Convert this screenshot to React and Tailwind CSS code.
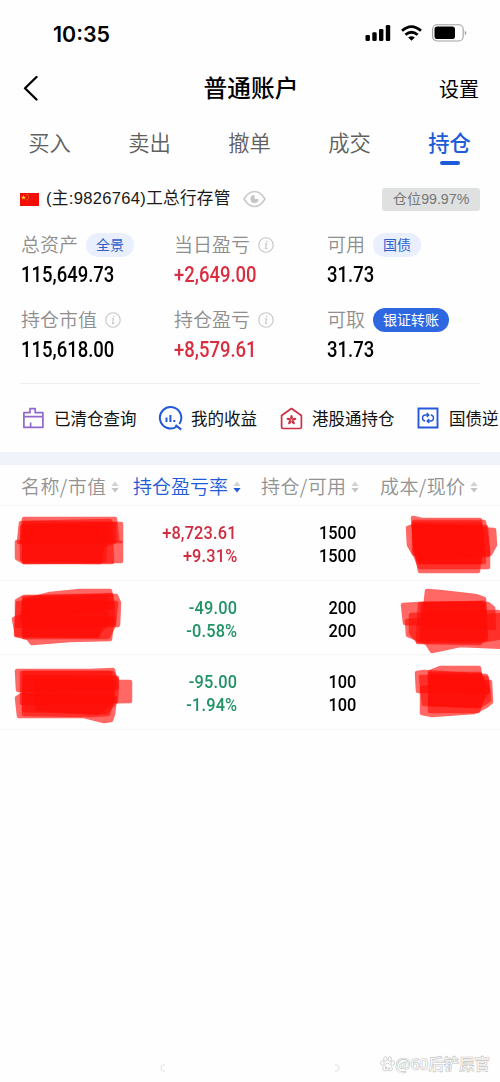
const summary = [
  { label: '总资产', value: '115,649.73', tag: '全景' },
  { label: '当日盈亏', value: '+2,649.00', info: true, red: true },
  { label: '可用', value: '31.73', tag: '国债' },
  { label: '持仓市值', value: '115,618.00', info: true },
  { label: '持仓盈亏', value: '+8,579.61', info: true, red: true },
  { label: '可取', value: '31.73', tag: '银证转账', solid: true },
];

// marker strokes are stored in page coordinates, each row opens its own viewBox
const positions = [
  {
    top: 506,
    profit: '+8,723.61',
    rate: '+9.31%',
    up: true,
    qty: '1500',
    left: [
      'M24 519L115 519L117 540L22 542Z',
      'M21 523L121 524L121 541L19 542Z',
      'M17 542L121 543L121 561L110 561L24 562L17 558Z',
      'M24 523L110 521L112 562L24 562Z',
      'M25 526L114 524L114 542L102 545L100 562L24 561Z',
      'M22 527L106 527L104 560L22 559Z',
    ],
    right: [
      'M413 518L422 520L480 520L481 540L478 571L420 571L415 545Z',
      'M408 528L414 526L494 530L495 545L490 554L414 554L409 545Z',
      'M414 522L484 522L488 550L488 567L420 567L414 552Z',
      'M414 524L480 524L484 562L420 562L415 550Z',
      'M414 526L486 527L488 555L418 559Z',
      'M420 529L480 528L480 562L420 562Z',
    ],
  },
  {
    top: 580,
    profit: '-49.00',
    rate: '-0.58%',
    qty: '200',
    left: [
      'M24 600L50 593L80 590L110 590L113 606L22 618Z',
      'M17 600L24 596L116 595L119 602L118 624L17 625Z',
      'M14 618L20 616L112 618L110 638L70 639L32 642L28 637L17 634Z',
      'M24 597L111 594L114 624L108 636L24 636Z',
      'M18 602L116 602L114 622L100 624L98 635L16 634Z',
      'M25 599L106 596L107 623L96 634L24 634Z',
    ],
    right: [
      'M427 590L440 591L475 595L484 598L485 618L424 618Z',
      'M403 604L420 603L488 603L493 607L494 627L405 622Z',
      'M407 620L503 614L503 646L460 644L432 650L427 642L408 634Z',
      'M420 603L484 602L486 634L480 642L418 641Z',
      'M411 614L498 611L502 636L480 640L418 640L411 632Z',
      'M423 603L482 602L486 638L422 638Z',
    ],
  },
  {
    top: 655,
    profit: '-95.00',
    rate: '-1.94%',
    qty: '100',
    left: [
      'M17 671L90 671L113 670L117 688L18 690Z',
      'M22 673L112 673L118 682L130 682L130 701L22 703Z',
      'M17 698L22 695L115 698L113 714L111 720L104 721L84 716L19 716Z',
      'M24 673L110 673L112 700L108 714L90 715L24 714Z',
      'M25 677L117 678L116 701L106 712L24 710Z',
      'M37 680L114 682L112 702L98 713L37 709Z',
    ],
    right: [
      'M430 672L440 668L479 668L482 690L430 690Z',
      'M417 673L424 672L486 676L488 692L418 691Z',
      'M422 688L490 682L491 702L486 706L474 712L432 715L422 713Z',
      'M430 674L480 674L484 692L478 711L430 711Z',
      'M421 677L487 678L489 700L480 706L424 704Z',
      'M432 676L480 676L488 690L478 706L430 704Z',
    ],
  },
];

function Num({ children, right, small }) {
  return (
    <span
      className={`block w-max whitespace-nowrap font-[Roboto,sans-serif] font-medium ${
        right ? 'origin-right' : 'origin-left'
      } ${small ? 'text-[19px] leading-[23px] scale-x-[0.86]' : 'text-[22px] leading-[26px] scale-x-[0.84]'}`}
    >
      {children}
    </span>
  );
}

function Info() {
  return (
    <svg className="w-4 h-4" viewBox="0 0 16 16" fill="none" stroke="#c6c6c6">
      <circle cx="8" cy="8" r="7.2" strokeWidth="1.1" />
      <path d="M6.8 6.8H8.5L7.5 11.4H9.2" strokeWidth="1.1" />
      <circle cx="8.7" cy="4.5" r="0.8" fill="#c6c6c6" stroke="none" />
    </svg>
  );
}

function Sort({ active }) {
  return (
    <svg className="w-2 h-3" viewBox="0 0 8 12">
      <path d="M4 0.5L7.6 5H0.4Z" fill="#d0d0d0" />
      <path d="M4 11.5L7.6 7H0.4Z" fill={active ? '#1e5bd8' : '#c4c4c4'} />
    </svg>
  );
}

function Scribble({ paths, x, top, width }) {
  return (
    <svg width={width} height="74" viewBox={`${x} ${top} ${width} 74`} className="shrink-0 blur-[0.5px]">
      {paths.map((d) => (
        <path key={d} d={d} fill="#ff0c06" stroke="#ff0c06" strokeWidth="4.5" strokeLinejoin="round" opacity="0.62" />
      ))}
    </svg>
  );
}

function StatusBar() {
  return (
    <div className="h-[66px] flex items-center justify-between pl-[53px] pr-[33px]">
      <span className="pt-[2px] font-[Inter,sans-serif] text-[21.4px] font-semibold">10:35</span>
      <div className="flex items-center gap-[10px]">
        <svg width="26" height="16" viewBox="0 0 26 16">
          <rect x="0.5" y="10" width="4.4" height="6" rx="1.3" />
          <rect x="7.3" y="7.3" width="4.4" height="8.7" rx="1.3" />
          <rect x="14" y="4" width="4.4" height="12" rx="1.3" />
          <rect x="20.8" y="0" width="4.4" height="16" rx="1.3" />
        </svg>
        <svg width="21" height="16" viewBox="0 0 21 16" fill="none" stroke="#000" strokeWidth="2.8">
          <path d="M1 5.8Q10.5 -2.6 20 5.8" />
          <path d="M4.4 9.8Q10.5 4.6 16.6 9.8" />
          <path d="M10.5 15.7L7.2 12.5Q10.5 10 13.8 12.5Z" fill="#000" stroke="none" />
        </svg>
        <svg width="35" height="18" viewBox="0 0 35 18">
          <rect x="0.6" y="0.8" width="30.6" height="16.2" rx="4.5" fill="none" stroke="#a0a0a0" strokeWidth="1.1" />
          <rect x="2.5" y="2.6" width="20.5" height="12.5" rx="2.8" />
          <path d="M32.8 6.5Q36 8.9 32.8 11.3Z" fill="#a0a0a0" />
        </svg>
      </div>
    </div>
  );
}

function Shortcuts() {
  return (
    <div className="h-[68px] flex items-center overflow-hidden whitespace-nowrap text-[16.5px] text-[#111]">
      <div className="w-[136px] shrink-0 flex items-center gap-[10px] pl-[22px]">
        <svg className="shrink-0" width="22" height="22" viewBox="0 0 22 22" fill="none" stroke="#9069cd" strokeWidth="1.7">
          <path d="M1.9 10V5.7H8V1.6H13.2V5.7H20.9V10M1.9 9.6H20.9V20.4H1.9ZM8.6 15.5V20" strokeLinejoin="round" />
        </svg>
        <span className="pt-[3px]">已清仓查询</span>
      </div>
      <div className="w-[143px] shrink-0 flex items-center gap-[8px] pl-[22px]">
        <svg className="shrink-0" width="25" height="25" viewBox="0 0 25 25" fill="none" stroke="#2258d8" strokeWidth="2">
          <path d="M18.8 20.5A10.7 10.7 0 1 1 21.3 18M17.5 19L23.2 23.6" />
          <path d="M8.5 11.5V16M12.4 9V16M16.3 14V16" />
        </svg>
        <span className="pt-[3px]">我的收益</span>
      </div>
      <div className="w-[137px] shrink-0 flex items-center gap-[9px] pl-[1px]">
        <svg className="shrink-0" width="23" height="23" viewBox="0 0 23 23" fill="none" stroke="#cf2e45" strokeWidth="1.7">
          <path d="M1.6 8.5L11.5 1.5L21.4 8.5V20Q21.4 21.5 19.9 21.5H3.1Q1.6 21.5 1.6 20Z" strokeLinejoin="round" />
          {[0, 72, 144, 216, 288].map((a) => (
            <ellipse key={a} cx="11.5" cy="10.2" rx="1.3" ry="2.3" fill="#cf2e45" stroke="none" transform={`rotate(${a} 11.5 13)`} />
          ))}
        </svg>
        <span className="pt-[3px]">港股通持仓</span>
      </div>
      <div className="shrink-0 flex items-center gap-[10px] pl-[1px]">
        <svg className="shrink-0" width="22" height="22" viewBox="0 0 22 22" fill="none" stroke="#2459dc" strokeWidth="1.9">
          <path d="M1.5 1.5H20.5V20.5H1.5Z" />
          <path d="M8.2 14H8Q5.5 13.5 5.5 11Q5.5 8 8.5 8H11.5M9.8 6L11.8 8L9.8 10M13.8 8H14Q16.5 8.5 16.5 11Q16.5 14 13.5 14H10.5M12.2 12L10.2 14L12.2 16" strokeWidth="1.4" />
        </svg>
        <span className="pt-[3px]">国债逆</span>
      </div>
    </div>
  );
}

export default function App() {
  return (
    <div className="w-[500px] h-[1082px] flex flex-col overflow-hidden bg-[#fefefe] text-black font-['Liberation_Sans','Noto_Sans_CJK_SC',sans-serif]">
      <StatusBar />

      <header className="h-11 flex items-center justify-between pl-[23px] pr-[21px]">
        <svg width="40" height="26" viewBox="0 0 40 26" fill="none" stroke="#000" strokeWidth="2.3">
          <path d="M13.5 2L2 13.2L13.5 24.5" strokeLinecap="round" strokeLinejoin="round" />
        </svg>
        <h1 className="pt-1 text-[23.7px] font-medium">普通账户</h1>
        <span className="pt-[4px] text-[20px]">设置</span>
      </header>

      <nav className="h-14 grid grid-cols-5 text-center text-[21.3px] text-[#606060]">
        {['买入', '卖出', '撤单', '成交', '持仓'].map((t) => (
          <div
            key={t}
            className={`flex flex-col items-center pt-[18px] pr-[1px] leading-[32px] ${
              t === '持仓' ? 'text-[#1e5bd8] font-medium' : 'font-[350]'
            }`}
          >
            {t}
            {t === '持仓' && <i className="mt-[1px] w-5 h-1 rounded-full bg-[#1e5bd8]" />}
          </div>
        ))}
      </nav>

      <div className="h-[66px] flex items-center pl-5 pr-5">
        <svg width="19" height="13" viewBox="0 0 19 13">
          <rect width="19" height="13" fill="#f20d06" />
          <path d="M3.5 2L4.1 3.8H6L4.5 4.9L5 6.7L3.5 5.6L2 6.7L2.5 4.9L1 3.8H2.9Z" fill="#ffd21f" />
          <path d="M6.5 1.5H7.5M8 3H9M8 5H9M6.5 6.8H7.5" stroke="#ffc21f" strokeWidth="0.8" />
        </svg>
        <span className="ml-[7px] pt-[1px] text-[16.6px] tracking-[0.3px] text-[#1a1a1a]">(主:9826764)工总行存管</span>
        <svg className="ml-3" width="23" height="18" viewBox="0 0 23 18" fill="none">
          <path d="M1 9Q5.5 1.5 11.5 1.5T22 9Q17.5 16.5 11.5 16.5T1 9Z" stroke="#c9c9c9" strokeWidth="1.6" />
          <path d="M11.5 5A4 4 0 1 0 15.5 9H12Q11.5 9 11.5 8.5Z" fill="#c4c4c4" />
        </svg>
        <span className="ml-auto w-[98px] h-[23px] rounded-[3px] bg-[#dfe1e1] text-[#767676] text-[14.2px] leading-[23px] text-center">
          仓位99.97%
        </span>
      </div>

      <section className="h-[151px] grid grid-cols-[153px_153px_1fr] auto-rows-[75px] pl-[21px]">
        {summary.map((s) => (
          <div key={s.label}>
            <div className="h-[26px] flex items-center text-[19px] font-[350] text-[#8e8e8e]">
              <span className="pt-[3px]">{s.label}</span>
              {s.info && <span className="ml-2"><Info /></span>}
              {s.tag && (
                <span
                  className={`ml-2 h-6 px-[10px] rounded-full text-[14px] font-normal leading-6 ${
                    s.solid ? 'bg-[#2e68e1] text-white' : 'bg-[#e9effd] text-[#2c5fcc]'
                  }`}
                >
                  {s.tag}
                </span>
              )}
            </div>
            <div className={`mt-[4px] ${s.red ? 'text-[#d92d40]' : 'text-black'}`}>
              <Num>{s.value}</Num>
            </div>
          </div>
        ))}
      </section>

      <div className="mx-5 h-px bg-[#efefef]" />
      <Shortcuts />
      <div className="h-[13px] shrink-0 bg-[#f1f3fa]" />

      <div className="h-[41px] shrink-0 flex items-center pt-[3px] text-[19px] font-[350] text-[#929292] whitespace-nowrap border-b border-[#f6f6f6] font-['Noto_Sans_CJK_SC',sans-serif]">
        <div className="w-[133px] pl-[21px] flex items-center gap-[5px] tracking-[0.4px]">名称/市值<Sort /></div>
        <div className="w-[128px] flex items-center gap-[5px] text-[#1e5bd8]">持仓盈亏率<Sort active /></div>
        <div className="w-[119px] flex items-center gap-[5px] tracking-[0.4px]">持仓/可用<Sort /></div>
        <div className="flex items-center gap-[5px] tracking-[0.4px]">成本/现价<Sort /></div>
      </div>

      {positions.map((p) => (
        <div key={p.top} className="h-[74.5px] shrink-0 flex items-start border-b border-[#f6f6f6]">
          <Scribble paths={p.left} x={0} top={p.top} width={136} />
          <div className={`w-[101px] pt-[15px] flex flex-col items-end tracking-[0.2px] ${p.up ? 'text-[#cf2c41]' : 'text-[#229366]'}`}>
            <Num right small>{p.profit}</Num>
            <Num right small>{p.rate}</Num>
          </div>
          <div className="w-[119px] pt-[15px] flex flex-col items-end">
            <Num right small>{p.qty}</Num>
            <Num right small>{p.qty}</Num>
          </div>
          <div className="w-[144px] flex justify-end">
            <Scribble paths={p.right} x={390} top={p.top} width={110} />
          </div>
        </div>
      ))}

      <footer className="mt-auto h-[36px] flex items-center">
        <svg className="ml-[160px] mt-2" width="180" height="8" viewBox="0 0 180 8" fill="none" stroke="#e2e2e2">
          <path d="M5 1H3Q1 1 1 4T3 7H5M175 1H177Q179 1 179 4T177 7H175" />
        </svg>
        <div className="ml-[40px] flex items-center whitespace-nowrap text-[15.5px] font-bold text-white [-webkit-text-stroke:0.6px_#c4c4c4] font-['Noto_Sans_CJK_SC',sans-serif] tracking-[-0.2px]">
          <svg width="15" height="16" viewBox="0 0 15 16" fill="#fff" stroke="#c4c4c4" strokeWidth="0.8">
            <ellipse cx="2.4" cy="7" rx="1.8" ry="2.3" />
            <ellipse cx="5.4" cy="3" rx="1.7" ry="2.3" />
            <ellipse cx="9.8" cy="3" rx="1.7" ry="2.3" />
            <ellipse cx="12.7" cy="7" rx="1.8" ry="2.3" />
            <path d="M7.5 7Q9 7 10.5 9.5Q13.5 12 12 14Q10.5 15.5 7.5 14.5Q4.5 15.5 3 14Q1.5 12 4.5 9.5Q6 7 7.5 7Z" />
            <path d="M5.5 10.5V13H7V11.5H5.5M8.5 11.5V13H10V11.5" />
          </svg>
          @60后铲屎官
        </div>
      </footer>
    </div>
  );
}
